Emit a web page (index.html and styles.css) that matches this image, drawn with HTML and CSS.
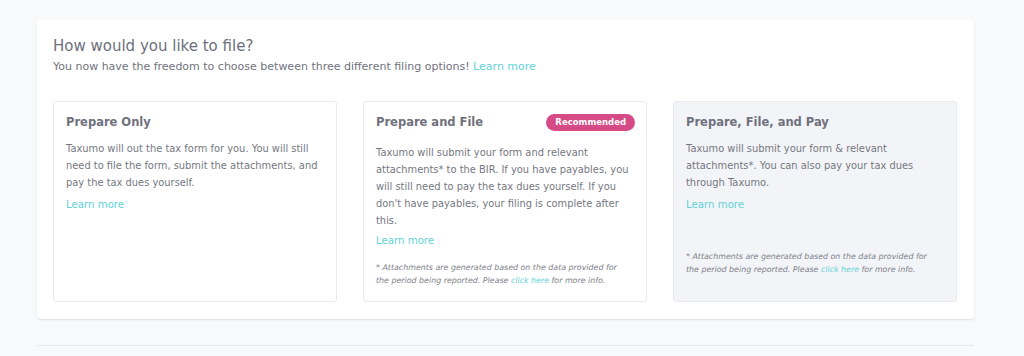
FILE: index.html
```html
<!DOCTYPE html>
<html lang="en">
<head>
<meta charset="utf-8">
<title>How would you like to file?</title>
<link rel="stylesheet" href="styles.css">
</head>
<body>
<div class="page">
  <section class="panel">
    <h1 class="title">How would you like to file?</h1>
    <p class="subtitle">You now have the freedom to choose between three different filing options! <a class="link" href="#">Learn more</a></p>
    <div class="options">
      <div class="option">
        <div class="option-head"><h2 class="option-title">Prepare Only</h2></div>
        <p class="option-text">Taxumo will out the tax form for you. You will still need to file the form, submit the attachments, and pay the tax dues yourself.</p>
        <a class="link option-link" href="#">Learn more</a>
      </div>
      <div class="option option-rec">
        <div class="option-head"><h2 class="option-title">Prepare and File</h2><span class="badge">Recommended</span></div>
        <p class="option-text">Taxumo will submit your form and relevant attachments* to the BIR. If you have payables, you will still need to pay the tax dues yourself. If you don't have payables, your filing is complete after this.</p>
        <a class="link option-link" href="#">Learn more</a>
        <p class="note">* Attachments are generated based on the data provided for the period being reported. Please <a class="link" href="#">click here</a> for more info.</p>
      </div>
      <div class="option option-muted">
        <div class="option-head"><h2 class="option-title">Prepare, File, and Pay</h2></div>
        <p class="option-text">Taxumo will submit your form &amp; relevant attachments*. You can also pay your tax dues through Taxumo.</p>
        <a class="link option-link" href="#">Learn more</a>
        <p class="note note-bottom">* Attachments are generated based on the data provided for the period being reported. Please <a class="link" href="#">click here</a> for more info.</p>
      </div>
    </div>
  </section>
  <hr class="divider">
</div>
</body>
</html>
```

FILE: styles.css
```css
* { box-sizing: border-box; }
html, body { margin: 0; padding: 0; }
body {
  background: #f8f9fb;
  font-family: "DejaVu Sans", "Noto Sans", sans-serif;
  color: #72747f;
  width: 1024px;
  height: 356px;
  overflow: hidden;
}
.page { padding: 20px 50px 0 37px; }
.panel {
  background: #fff;
  border-radius: 4px;
  box-shadow: 0 1px 2px rgba(0,0,0,0.10);
  padding: 16px 16px 17px 16px;
}
.title {
  margin: 0;
  font-size: 15px;
  font-weight: 500;
  color: #6d6f7c;
  line-height: 20px;
}
.subtitle {
  margin: 3px 0 0;
  font-size: 11px;
  line-height: 16px;
  color: #70727d;
}
.link { color: #62d3da; text-decoration: none; }
.options {
  margin-top: 26px;
  display: grid;
  grid-template-columns: repeat(3, 284px);
  column-gap: 26px;
}
.option {
  border: 1px solid #e9eaee;
  border-radius: 3px;
  padding: 12px 12px 15px 12px;
  display: flex;
  flex-direction: column;
  height: 201px;
}
.option-muted { background: #f3f4f7; }
.option-head {
  display: flex;
  justify-content: space-between;
  align-items: center;
  height: 16px;
}
.option-title {
  margin: 0;
  font-size: 11.5px;
  font-weight: bold;
  color: #6f717d;
}
.badge {
  background: #d64a86;
  color: #fff;
  font-size: 8.5px;
  font-weight: bold;
  border-radius: 9px;
  padding: 0 9px;
  height: 17px;
  line-height: 17px;
  margin-right: -1px;
}
.option-text {
  margin: 10px 0 0;
  font-size: 9.9px;
  line-height: 17px;
  color: #75777f;
}
.option-rec .option-text { margin-top: 14px; }
.option-link {
  margin-top: 5px;
  font-size: 10.2px;
  line-height: 17px;
}
.option-rec .option-link { margin-top: 3px; }
.note {
  margin: 12px 0 0;
  padding-right: 10px;
  font-size: 7.9px;
  font-style: italic;
  line-height: 13px;
  color: #7c7e88;
}
.note-bottom { margin-top: auto; margin-bottom: 10px; }
.divider {
  border: 0;
  border-top: 1px solid #e6e8ec;
  margin: 26px 0 0;
}
```
